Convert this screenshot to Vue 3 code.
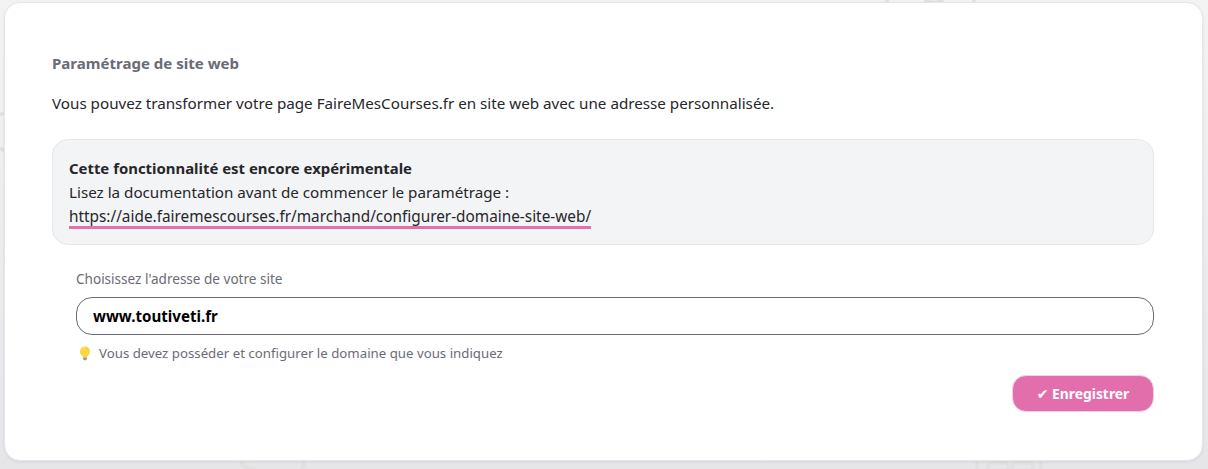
<script setup>
const url = 'https://aide.fairemescourses.fr/marchand/configurer-domaine-site-web/'
</script>

<template>
  <div class="page">
    <svg class="doodles" width="1208" height="469" viewBox="0 0 1208 469" fill="none" stroke="#e0e0e1" stroke-width="3.500">
      <path d="M241 461c1 5 7 9 15 8M304 461c0 3-1 6-3 8" />
      <path d="M977 469v-10M1041 469v-10M988 469v-3q0-3 3-3h14q3 0 3 3v3M1012 469v-3q0-3 3-3h15q3 0 3 3v3" />
      <path d="M887 3v-5M974 3v-5M925 0c3 3 14 3 18 0" />
      <path d="M0 115l4-2M0 148l4 3" />
    </svg>
    <main class="card">
      <h2 class="title">Paramétrage de site web</h2>
      <p class="intro">Vous pouvez transformer votre page FaireMesCourses.fr en site web avec une adresse personnalisée.</p>
      <div class="notice">
        <strong>Cette fonctionnalité est encore expérimentale</strong>
        <span>Lisez la documentation avant de commencer le paramétrage :</span>
        <span><a class="link" :href="url">{{ url }}</a></span>
      </div>
      <div class="field">
        <label class="label" for="site">Choisissez l'adresse de votre site</label>
        <input id="site" class="input" type="text" value="www.toutiveti.fr" />
        <p class="hint">
          <svg class="bulb" width="12" height="15" viewBox="0 0 12 15">
            <path d="M6 .5a5 5 0 0 0-3 9c.7.6 1 1.200 1 2h4c0-.8.3-1.400 1-2a5 5 0 0 0-3-9z" fill="#fcd53f" />
            <path d="M3.500 3.500a3 3 0 0 1 2-1.500" fill="none" stroke="#fff3b0" stroke-width="1" />
            <path d="M4 11.500h4v1.500l-1 1.200H5L4 13z" fill="#9b9b9b" />
          </svg>
          <span>Vous devez posséder et configurer le domaine que vous indiquez</span>
        </p>
      </div>
      <div class="actions">
        <button class="save" type="button"><span class="check">✔</span> Enregistrer</button>
      </div>
    </main>
  </div>
</template>

<style>
html, body { margin: 0; background: #f0f0f1; }
</style>

<style scoped>
.page {
  position: relative;
  box-sizing: border-box;
  width: 1208px;
  height: 469px;
  padding: 2px 5px 8px 4px;
  overflow: hidden;
  background: linear-gradient(#f3f3f4, #e6e6e8);
  font-family: "Noto Sans", "Open Sans", sans-serif;
  color: #26262b;
}
.doodles { position: absolute; left: 0; top: 0; }
.card {
  position: relative;
  box-sizing: border-box;
  height: 459px;
  padding: 50px 48px 0 47px;
  background: #fff;
  border: 1px solid #e5e5ee;
  border-radius: 16px;
  box-shadow: 0 1px 3px rgba(0, 0, 0, .08);
}
.title {
  margin: 0;
  font-size: 15.050px;
  line-height: 20px;
  font-weight: 700;
  color: #6b6b76;
}
.intro {
  margin: 20px 0 0;
  font-size: 15.200px;
  line-height: 20px;
}
.notice {
  display: flex;
  flex-direction: column;
  box-sizing: border-box;
  height: 106px;
  margin-top: 26px;
  padding: 16px 16px 0;
  background: #f3f4f6;
  border: 1px solid #e5e7eb;
  border-radius: 16px;
  font-size: 15.200px;
  line-height: 24px;
}
.notice strong { font-size: 14.900px; font-weight: 700; }
.link {
  font-size: 15.350px;
  color: inherit;
  text-decoration: none;
  border-bottom: 3px solid #e36fab;
}
.field { padding-left: 24px; }
.label {
  display: block;
  margin-top: 25px;
  font-size: 13.550px;
  line-height: 18px;
  color: #6b6b76;
}
.input {
  display: block;
  box-sizing: border-box;
  width: 100%;
  height: 38px;
  margin-top: 9px;
  padding: 0 16px;
  border: 1px solid #6b6b76;
  border-radius: 16px;
  outline: none;
  background: #fff;
  font-family: inherit;
  font-size: 15.100px;
  font-weight: 700;
  color: #000;
}
.hint {
  display: flex;
  align-items: center;
  gap: 8px;
  margin: 9px 0 0;
  padding-left: 3px;
  font-size: 13.250px;
  line-height: 18px;
  color: #6b6b76;
}
.actions {
  display: flex;
  justify-content: flex-end;
  margin-top: 13px;
}
.save {
  box-sizing: border-box;
  width: 142px;
  height: 37px;
  border: 1px solid #f5cfe3;
  border-radius: 14px;
  background: #e26fab;
  color: #fff;
  font-family: inherit;
  font-size: 13.900px;
  font-weight: 700;
}
.check { font-family: "DejaVu Sans", sans-serif; font-weight: 700; }
</style>
